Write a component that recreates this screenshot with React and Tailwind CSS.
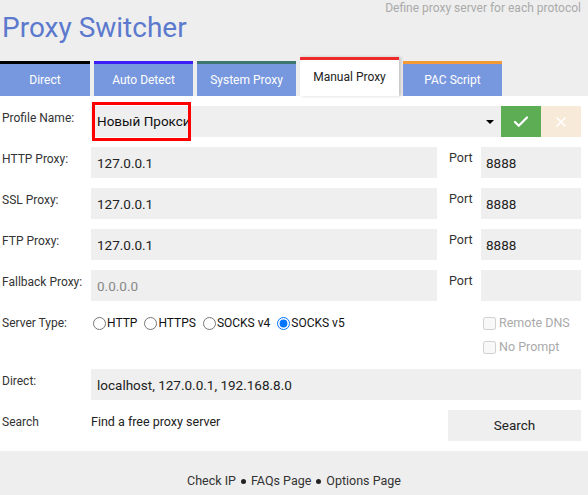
import { Check, X } from 'lucide-react';

const tabs = [
  { label: 'Direct', w: 'w-[90px]', border: 'border-t-[#000000]' },
  { label: 'Auto Detect', w: 'w-[99px]', border: 'border-t-[#3a1ef5]' },
  { label: 'System Proxy', w: 'w-[99px]', border: 'border-t-[#3d766f]' },
  { label: 'Manual Proxy', w: 'w-[99px]', active: true },
  { label: 'PAC Script', w: 'w-[99px]', border: 'border-t-[#f39a37]' },
];

const proxies = [
  { label: 'HTTP Proxy:', host: '127.0.0.1', port: '8888' },
  { label: 'SSL Proxy:', host: '127.0.0.1', port: '8888' },
  { label: 'FTP Proxy:', host: '127.0.0.1', port: '8888' },
  { label: 'Fallback Proxy:', host: '', placeholder: '0.0.0.0', port: '' },
];

const types = ['HTTP', 'HTTPS', 'SOCKS v4', 'SOCKS v5'];

const App = () => {
  return (
    <div className="w-[588px] min-h-[495px] bg-white font-['Roboto',sans-serif] text-[#333]">
      {/* Header */}
      <header className="bg-[#eeeeee] h-[96px] flex flex-col justify-between">
        <div className="flex justify-between items-start">
          <h1 className="text-[28px] leading-none text-[#5b79cd] pl-[2px] pt-[14px]">Proxy Switcher</h1>
          <p className="text-[12px] leading-none text-[#aaaaaa] pr-[7px] pt-[2px]">Define proxy server for each protocol</p>
        </div>
        <nav className="flex items-end gap-[4px]">
          {tabs.map((t) =>
            t.active ? (
              <div
                key={t.label}
                className={`${t.w} h-[39px] bg-white border-t-[3px] border-t-[#ee2a2a] flex justify-center pt-[8px] text-[12px] text-[#222] shadow-[2px_0_3px_rgba(0,0,0,0.18)]`}
              >
                {t.label}
              </div>
            ) : (
              <div
                key={t.label}
                className={`${t.w} h-[35px] bg-[#7798de] border-t-[3px] ${t.border} flex items-center justify-center text-[12px] text-white`}
              >
                {t.label}
              </div>
            )
          )}
        </nav>
      </header>

      {/* Form */}
      <div className="pl-[2px] pr-[7px] pt-[10px] flex flex-col gap-[10px]">
        <div className="flex h-[31px]">
          <label className="w-[89px] text-[12px] pt-[3px]">Profile Name:</label>
          <div className="flex-1 bg-[#efefef] flex items-center relative">
            <span className="absolute left-[1px] top-[-4px] h-[39px] w-[99px] border-[3px] border-[#ff0000]" />
            <span className="pl-[6px] text-[13.5px] text-[#111] flex-1">Новый Прокси</span>
            <span className="mr-[7px] w-0 h-0 border-l-[4px] border-r-[4px] border-t-[4px] border-l-transparent border-r-transparent border-t-black" />
          </div>
          <button className="w-[40px] bg-[#5cad54] flex items-center justify-center text-white">
            <Check size={18} strokeWidth={3} />
          </button>
          <button className="w-[40px] bg-[#f8ead8] flex items-center justify-center text-white">
            <X size={16} strokeWidth={2.5} />
          </button>
        </div>

        {proxies.map((p) => (
          <div key={p.label} className="flex h-[31px]">
            <label className="w-[89px] text-[12px] pt-[3px]">{p.label}</label>
            <div className="w-[346px] bg-[#efefef] flex items-center pl-[6px] pt-[2px] text-[13.5px] text-[#222]">
              {p.host || <span className="text-[#888]">{p.placeholder}</span>}
            </div>
            <div className="w-[44px] text-[12.5px] pl-[12px] pt-[2px]">Port</div>
            <div className="flex-1 bg-[#efefef] flex items-center pl-[5px] pt-[2px] text-[13.5px] text-[#222]">{p.port}</div>
          </div>
        ))}

        <div className="flex h-[48px] pt-[5px]">
          <label className="w-[89px] text-[12px] leading-[14px]">Server Type:</label>
          <div className="flex-1 flex items-start">
            <div className="flex items-center gap-[7px] text-[12px] leading-[14px] text-[#111] pl-[2px]">
              {types.map((t) => (
                <label key={t} className="flex items-center gap-[1px]">
                  <input type="radio" name="type" defaultChecked={t === 'SOCKS v5'} className="m-0 w-[13px] h-[13px]" />
                  {t}
                </label>
              ))}
            </div>
            <div className="ml-auto w-[98px] flex flex-col gap-[10px] text-[12.5px] leading-[14px] text-[#aaa]">
              <label className="flex items-center gap-[3px]">
                <input type="checkbox" disabled className="m-0 w-[13px] h-[13px]" />
                Remote DNS
              </label>
              <label className="flex items-center gap-[3px]">
                <input type="checkbox" disabled className="m-0 w-[13px] h-[13px]" />
                No Prompt
              </label>
            </div>
          </div>
        </div>

        <div className="flex h-[31px]">
          <label className="w-[89px] text-[12px] pt-[3px]">Direct:</label>
          <div className="flex-1 bg-[#efefef] flex items-center pl-[6px] pt-[2px] text-[13.5px] text-[#222]">
            localhost, 127.0.0.1, 192.168.8.0
          </div>
        </div>

        <div className="flex h-[31px]">
          <label className="w-[89px] text-[12px] pt-[3px]">Search</label>
          <div className="flex-1 text-[12.5px] pt-[3px] text-[#222]">Find a free proxy server</div>
          <button className="w-[133px] bg-[#efefef] text-[13.5px] text-[#222]">Search</button>
        </div>
      </div>

      {/* Footer */}
      <footer className="mt-[10px] bg-[#eeeeee] h-[44px] flex items-center justify-center pt-[17px] text-[12.5px] text-[#333] gap-[5px]">
        <span>Check IP</span>
        <span className="w-[5px] h-[5px] rounded-full bg-[#222]" />
        <span>FAQs Page</span>
        <span className="w-[5px] h-[5px] rounded-full bg-[#222]" />
        <span>Options Page</span>
      </footer>
    </div>
  );
};

export default App;
